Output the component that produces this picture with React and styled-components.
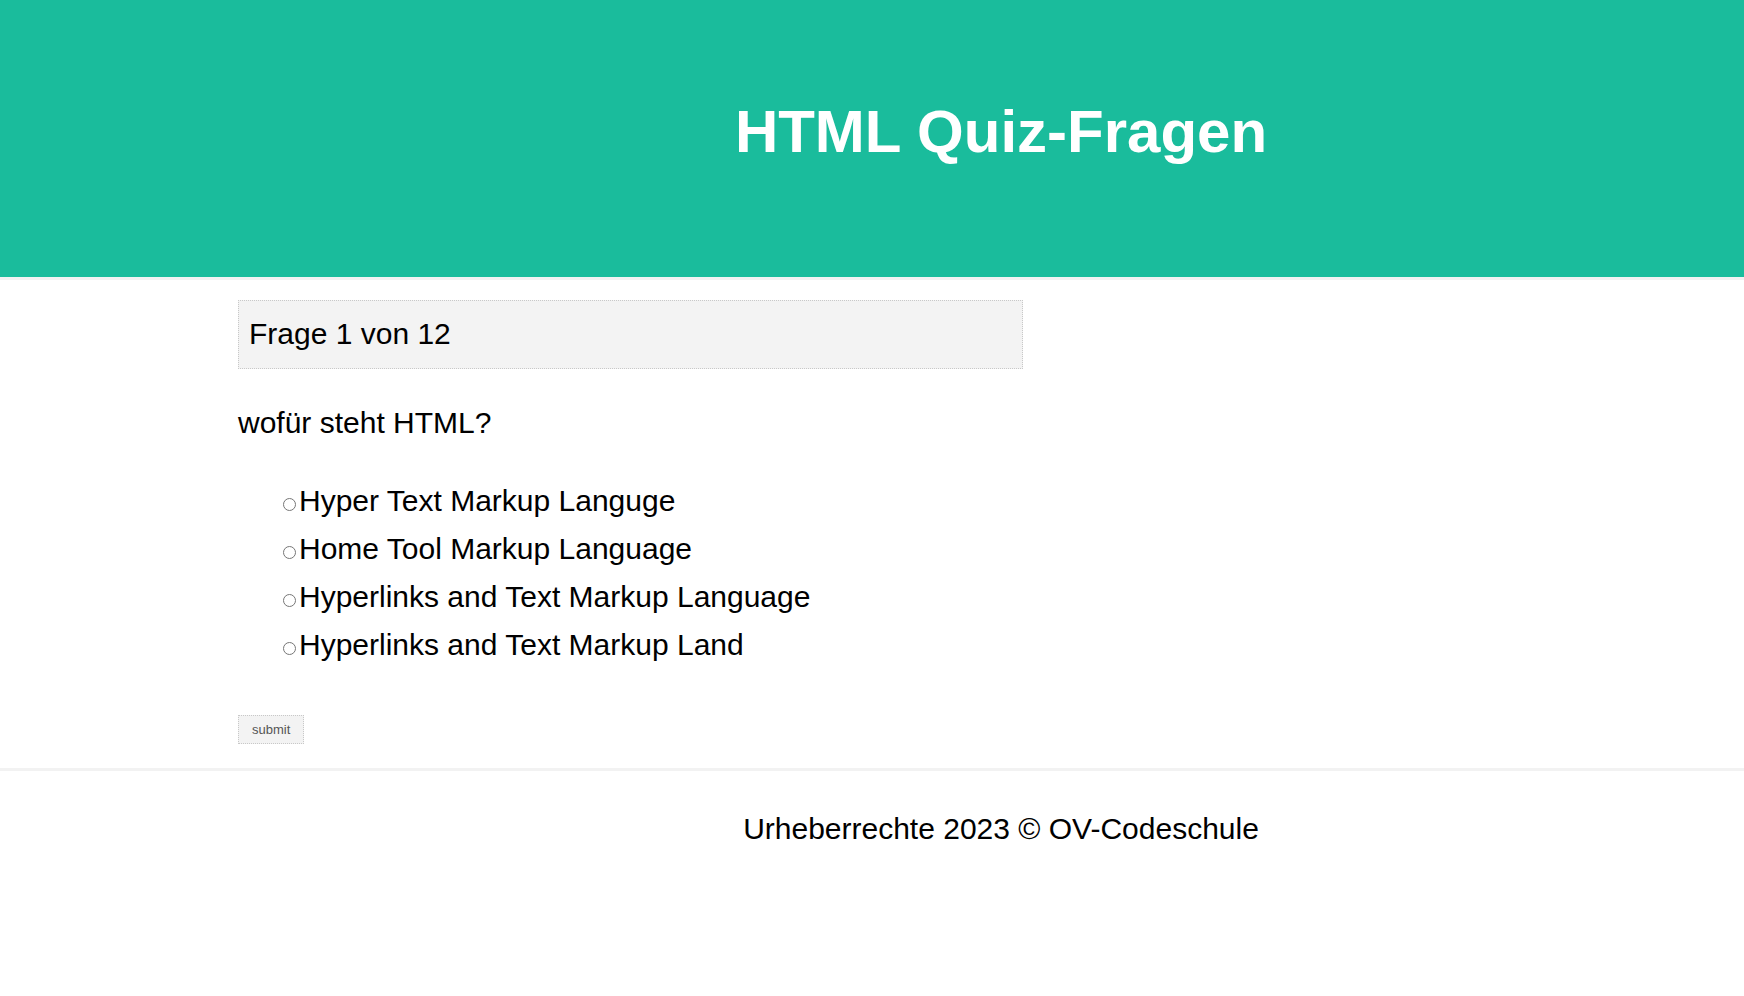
import styled, { createGlobalStyle } from "styled-components"

const GlobalStyle = createGlobalStyle`
  body {
    margin: 0;
    background: #fff;
    font-family: "Liberation Sans", Arial, sans-serif;
    color: #000;
  }
`

const antworten = [
  "Hyper Text Markup Languge",
  "Home Tool Markup Language",
  "Hyperlinks and Text Markup Language",
  "Hyperlinks and Text Markup Land",
]

export default function App() {
  return (
    <>
      <GlobalStyle />
      <Header>
        <h1>HTML Quiz-Fragen</h1>
      </Header>
      <Main>
        <Fortschritt>Frage 1 von 12</Fortschritt>
        <Frage>wofür steht HTML?</Frage>
        <Antworten>
          {antworten.map((text, i) => (
            <li key={i}>
              <input type="radio" name="antwort" id={`a${i}`} />
              <label htmlFor={`a${i}`}>{text}</label>
            </li>
          ))}
        </Antworten>
        <SubmitButton>submit</SubmitButton>
      </Main>
      <Footer>Urheberrechte 2023 © OV-Codeschule</Footer>
    </>
  )
}

const Header = styled.header`
  background-color: #1abc9c;
  padding: 97px 0 111px 258px;
  border-bottom: 3px solid #f2f2f2;
  text-align: center;

  h1 {
    margin: 0;
    color: #fff;
    font-size: 60px;
    font-weight: 700;
    line-height: 69px;
  }
`

const Main = styled.main`
  padding: 20px 0 24px 238px;
`

const Fortschritt = styled.div`
  box-sizing: border-box;
  width: 785px;
  padding: 15px 10px 17px;
  background: #f3f3f3;
  border: 1px dotted #c8c8c8;
  font-size: 30px;
  line-height: 35px;
`

const Frage = styled.p`
  margin: 36px 0 0;
  font-size: 30px;
  line-height: 35px;
`

const Antworten = styled.ul`
  list-style: none;
  margin: 37px 0 0;
  padding-left: 40px;

  li {
    font-size: 30px;
    line-height: 48px;
  }

  input {
    margin: 3px 3px 0 5px;
  }
`

const SubmitButton = styled.button`
  display: block;
  margin-top: 46px;
  padding: 6px 13px;
  background: #f3f3f3;
  border: 1px dotted #c8c8c8;
  color: #555;
  font-family: "Liberation Sans", Arial, sans-serif;
  font-size: 13px;
  line-height: 15px;
  cursor: pointer;
`

const Footer = styled.footer`
  border-top: 3px solid #f2f2f2;
  padding: 40px 0 60px 258px;
  text-align: center;
  font-size: 30px;
  line-height: 35px;
`
